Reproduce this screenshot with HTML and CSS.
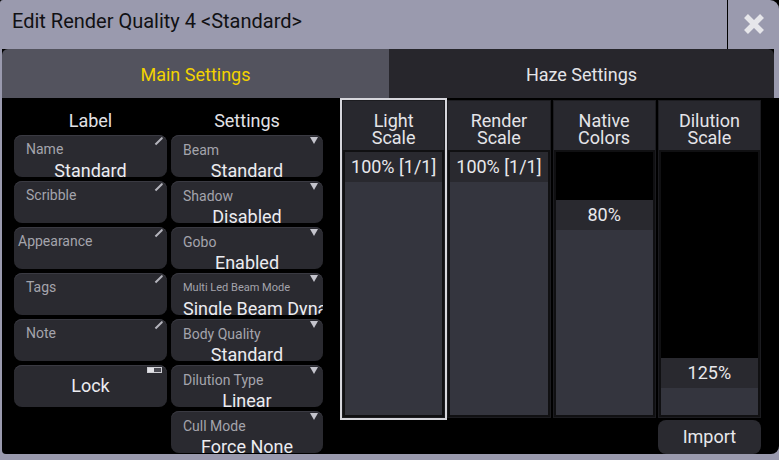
FILE: index.html
```html
<!DOCTYPE html>
<html lang="en">
<head>
<meta charset="utf-8">
<title>Edit Render Quality</title>
<link rel="stylesheet" href="styles.css">
</head>
<body>
<div class="window">
  <header class="titlebar">
    <div class="title">Edit Render Quality 4 &lt;Standard&gt;</div>
    <div class="close">
      <svg width="22" height="22" viewBox="0 0 22 22"><path d="M3 3 L19 19 M19 3 L3 19" stroke="#e6e6ea" stroke-width="5.5" stroke-linecap="butt"/></svg>
    </div>
  </header>
  <nav class="tabs">
    <div class="tab tab-active">Main Settings</div>
    <div class="tab tab-inactive">Haze Settings</div>
  </nav>
  <main class="content">
    <section class="panel panel-label">
      <div class="col-head">Label</div>
      <div class="btn"><span class="ico-edit"></span><div class="btn-title">Name</div><div class="btn-value">Standard</div></div>
      <div class="btn"><span class="ico-edit"></span><div class="btn-title">Scribble</div><div class="btn-value"></div></div>
      <div class="btn"><span class="ico-edit"></span><div class="btn-title btn-title-tight">Appearance</div><div class="btn-value"></div></div>
      <div class="btn"><span class="ico-edit"></span><div class="btn-title">Tags</div><div class="btn-value"></div></div>
      <div class="btn"><span class="ico-edit"></span><div class="btn-title">Note</div><div class="btn-value"></div></div>
      <div class="btn btn-lock"><span class="ico-toggle"><span class="ico-toggle-on"></span></span>Lock</div>
    </section>
    <section class="panel panel-settings">
      <div class="col-head">Settings</div>
      <div class="btn btn-set"><span class="ico-drop"></span><div class="btn-title">Beam</div><div class="btn-value">Standard</div></div>
      <div class="btn btn-set"><span class="ico-drop"></span><div class="btn-title">Shadow</div><div class="btn-value">Disabled</div></div>
      <div class="btn btn-set"><span class="ico-drop"></span><div class="btn-title">Gobo</div><div class="btn-value">Enabled</div></div>
      <div class="btn btn-set"><span class="ico-drop"></span><div class="btn-title btn-title-small">Multi Led Beam Mode</div><div class="btn-value">Single Beam Dynamic</div></div>
      <div class="btn btn-set"><span class="ico-drop"></span><div class="btn-title">Body Quality</div><div class="btn-value">Standard</div></div>
      <div class="btn btn-set"><span class="ico-drop"></span><div class="btn-title">Dilution Type</div><div class="btn-value">Linear</div></div>
      <div class="btn btn-set"><span class="ico-drop"></span><div class="btn-title">Cull Mode</div><div class="btn-value">Force None</div></div>
    </section>
    <section class="scales">
      <div class="scale-grid">
        <div class="scale scale-selected">
          <div class="scale-head">Light<br>Scale</div>
          <div class="track"><div class="track-empty" style="height:0px"></div><div class="track-value">100% [1/1]</div></div>
        </div>
        <div class="scale">
          <div class="scale-head">Render<br>Scale</div>
          <div class="track"><div class="track-empty" style="height:0px"></div><div class="track-value">100% [1/1]</div></div>
        </div>
        <div class="scale">
          <div class="scale-head">Native<br>Colors</div>
          <div class="track"><div class="track-empty" style="height:48px"></div><div class="track-value">80%</div></div>
        </div>
        <div class="scale">
          <div class="scale-head">Dilution<br>Scale</div>
          <div class="track"><div class="track-empty" style="height:206px"></div><div class="track-value">125%</div></div>
        </div>
      </div>
      <div class="scale-actions">
        <div class="import">Import</div>
      </div>
    </section>
  </main>
</div>
</body>
</html>
```
FILE: styles.css
```css
html, body {
  margin: 0;
  padding: 0;
  background: #000;
}
body {
  font-family: Roboto, "Noto Sans", Arial, sans-serif;
  width: 779px;
  height: 460px;
  overflow: hidden;
}
.window {
  width: 779px;
  height: 460px;
  background: #9a9aae;
  border-radius: 3px 9px 0 0;
  overflow: hidden;
}
.titlebar {
  height: 49px;
  display: flex;
}
.title {
  flex: 1;
  padding: 10px 0 0 12px;
  font-size: 20px;
  line-height: 22px;
  color: #111114;
  border-right: 1px solid #000;
}
.close {
  width: 51px;
  display: flex;
  align-items: center;
  justify-content: center;
  padding-bottom: 1px;
}
.tabs {
  height: 49px;
  margin: 0 5px 0 2px;
  background: #000;
  display: flex;
}
.tab {
  display: flex;
  align-items: center;
  justify-content: center;
  font-size: 18px;
  padding-top: 1px;
  box-sizing: border-box;
}
.tab-active {
  flex: 0 0 387px;
  background: #53535e;
  color: #f2d200;
  border-top-left-radius: 6px;
}
.tab-inactive {
  flex: 1;
  background: #27262c;
  color: #e4e4e8;
  border-top-right-radius: 6px;
}
.content {
  margin-left: 2px;
  height: 356px;
  background: #000;
  border-radius: 0 0 8px 4px;
  display: flex;
  padding: 2px 0 0 12px;
  box-sizing: border-box;
}
.panel {
  display: flex;
  flex-direction: column;
  gap: 4px;
}
.panel-label {
  width: 153px;
}
.panel-settings {
  width: 152px;
  margin-left: 4px;
}
.col-head {
  height: 31px;
  box-sizing: border-box;
  padding-top: 11px;
  line-height: 20px;
  font-size: 18px;
  text-align: center;
  color: #e2e2e6;
}
.btn {
  position: relative;
  height: 42px;
  flex: 0 0 42px;
  background: #2a2a30;
  border-radius: 8px;
  box-shadow: inset 0 1px 0 #3a3a42;
  overflow: hidden;
}
.btn-title {
  padding: 6px 0 0 12px;
  height: 16px;
  line-height: 16px;
  font-size: 14px;
  color: #a4a4ac;
  white-space: nowrap;
}
.btn-set .btn-title {
  padding-top: 7px;
  height: 15px;
}
.btn-title-tight {
  padding-left: 4px;
}
.btn-title-small {
  font-size: 11px;
}
.btn-value {
  margin-top: 4px;
  padding: 0 12px;
  height: 20px;
  line-height: 20px;
  font-size: 18px;
  text-align: center;
  color: #ececf0;
  white-space: nowrap;
}
.btn-lock {
  line-height: 42px;
  text-align: center;
  font-size: 18px;
  color: #ececf0;
}
.ico-edit {
  position: absolute;
  top: 4px;
  right: 3px;
  width: 10px;
  height: 2px;
  background: #b4b4bc;
  transform: rotate(-45deg);
  transform-origin: center;
  border-radius: 0 1px 1px 0;
  margin-top: 1px;
}
.ico-drop {
  position: absolute;
  top: 2px;
  right: 5px;
  width: 0;
  height: 0;
  border-left: 4.5px solid transparent;
  border-right: 4.5px solid transparent;
  border-top: 7px solid #c4c4cc;
}
.ico-toggle {
  position: absolute;
  top: 2px;
  right: 5px;
  width: 13px;
  height: 4px;
  border: 1px solid #cfcfd4;
  background: #4a4a52;
  display: flex;
  line-height: 0;
}
.ico-toggle-on {
  width: 6px;
  height: 4px;
  background: #e2e2e6;
}
.scales {
  width: 419px;
  margin-left: 19px;
  display: flex;
  flex-direction: column;
  gap: 2px;
}
.scale-grid {
  height: 318px;
  display: grid;
  grid-template-columns: repeat(4, 1fr);
  column-gap: 2px;
}
.scale {
  display: flex;
  flex-direction: column;
  background: #28282e;
  border: 1px solid #1c1c20;
  min-width: 0;
}
.scale-selected {
  outline: 2px solid #d6d6dc;
}
.scale-head {
  height: 49px;
  flex: 0 0 49px;
  box-sizing: border-box;
  padding-top: 11px;
  line-height: 17px;
  font-size: 18px;
  text-align: center;
  color: #e4e4e8;
}
.track {
  flex: 1;
  border: 2px solid #101012;
  background: #34353e;
  display: flex;
  flex-direction: column;
}
.track-empty {
  background: #000;
  flex: 0 0 auto;
}
.track-value {
  height: 30px;
  line-height: 30px;
  background: #29292f;
  text-align: center;
  font-size: 18px;
  color: #e8e8ec;
  white-space: nowrap;
}
.scale-actions {
  height: 34px;
  display: grid;
  grid-template-columns: repeat(4, 1fr);
  column-gap: 2px;
}
.import {
  grid-column: 4;
  background: #2a2a30;
  border-radius: 8px;
  line-height: 34px;
  text-align: center;
  font-size: 18px;
  color: #e8e8ec;
}
```
